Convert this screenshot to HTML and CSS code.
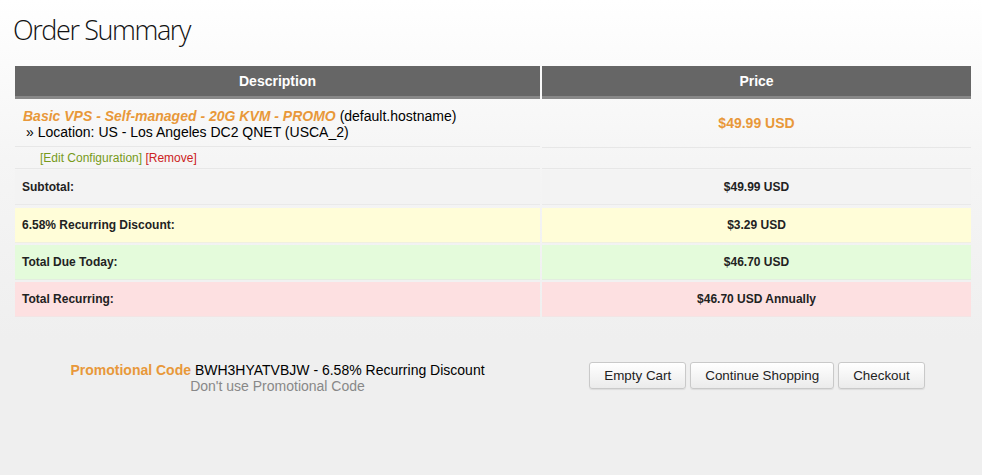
FILE: index.html
```html
<!DOCTYPE html>
<html>
<head>
<meta charset="utf-8">
<title>Order Summary</title>
<link rel="stylesheet" href="styles.css">
</head>
<body>
<div class="page">
  <h1 class="title">Order Summary</h1>
  <div class="cart">
    <div class="row head">
      <div class="cell">Description</div>
      <div class="cell">Price</div>
    </div>
    <div class="row item">
      <div class="cell desc">
        <div><span class="pname">Basic VPS - Self-managed - 20G KVM - PROMO</span> (default.hostname)</div>
        <div class="opt">&raquo; Location: US - Los Angeles DC2 QNET (USCA_2)</div>
      </div>
      <div class="cell price">$49.99 USD</div>
    </div>
    <div class="row actions">
      <div class="cell"><a class="edit" href="#">[Edit Configuration]</a> <a class="remove" href="#">[Remove]</a></div>
      <div class="cell"></div>
    </div>
    <div class="row sum subtotal">
      <div class="cell">Subtotal:</div>
      <div class="cell val">$49.99 USD</div>
    </div>
    <div class="row sum discount">
      <div class="cell">6.58% Recurring Discount:</div>
      <div class="cell val">$3.29 USD</div>
    </div>
    <div class="row sum today">
      <div class="cell">Total Due Today:</div>
      <div class="cell val">$46.70 USD</div>
    </div>
    <div class="row sum recurring">
      <div class="cell">Total Recurring:</div>
      <div class="cell val">$46.70 USD Annually</div>
    </div>
  </div>
  <div class="footer">
    <div class="promo">
      <div><span class="plabel">Promotional Code</span> BWH3HYATVBJW - 6.58% Recurring Discount</div>
      <a class="nopromo" href="#">Don't use Promotional Code</a>
    </div>
    <div class="buttons">
      <button class="btn">Empty Cart</button>
      <button class="btn">Continue Shopping</button>
      <button class="btn">Checkout</button>
    </div>
  </div>
</div>
</body>
</html>
```
FILE: styles.css
```css
html, body {
  margin: 0;
  padding: 0;
}
body {
  width: 982px;
  height: 475px;
  background: linear-gradient(to bottom, #ffffff 0px, #f5f5f5 160px, #efefef 340px, #efefef 475px);
  font-family: "Liberation Sans", Arial, Helvetica, sans-serif;
  color: #000;
  overflow: hidden;
}
.page {
  padding-left: 15px;
}
.title {
  margin: 13px 0 0 -2px;
  font-family: "Open Sans", sans-serif;
  font-weight: 300;
  font-size: 27px;
  line-height: 34px;
  letter-spacing: -1.4px;
  color: #111;
}
.cart {
  margin-top: 19px;
  width: 956px;
}
.row {
  display: grid;
  grid-template-columns: 525px 429px;
  column-gap: 2px;
}
.head .cell {
  background: #666666;
  border-bottom: 3px solid #888888;
  height: 30px;
  line-height: 30px;
  color: #fff;
  font-weight: bold;
  font-size: 14px;
  text-align: center;
}
.item .cell {
  height: 48px;
  border-bottom: 1px solid #e7e7e7;
}
.desc {
  padding: 9px 0 0 8px;
  font-size: 14px;
  line-height: 16px;
  box-sizing: border-box;
}
.pname {
  color: #e8983a;
  font-weight: bold;
  font-style: italic;
}
.opt {
  padding-left: 3px;
}
.price {
  color: #e8983a;
  font-weight: bold;
  font-size: 14px;
  text-align: center;
  line-height: 49px;
}
.actions .cell {
  height: 20px;
  border-bottom: 1px solid #e7e7e7;
  font-size: 12px;
  line-height: 21px;
  padding-left: 25px;
}
.actions {
  margin-bottom: 1px;
}
a {
  text-decoration: none;
}
.edit {
  color: #779a1a;
}
.remove {
  color: #cc2222;
}
.sum {
  margin-bottom: 2px;
}
.subtotal {
  margin-bottom: 3px;
}
.sum .cell {
  height: 34px;
  line-height: 35px;
  border-bottom: 1px solid #e9e9e9;
  font-size: 12px;
  font-weight: bold;
  color: #222;
}
.sum .cell:first-child {
  padding-left: 7px;
}
.sum .val {
  text-align: center;
}
.subtotal .cell {
  background: #f3f3f3;
}
.discount .cell {
  background: #fffdd8;
  border-bottom-color: #f0f0e0;
}
.today .cell {
  background: #e4fbdb;
  border-bottom-color: #e3ede0;
}
.recurring .cell {
  background: #fde0e1;
  border-bottom-color: #f3e4e4;
}
.footer {
  display: grid;
  grid-template-columns: 525px 429px;
  column-gap: 2px;
  align-items: center;
  margin-top: 39px;
  width: 956px;
}
.promo {
  text-align: center;
  font-size: 14px;
  line-height: 16px;
  padding-top: 6px;
}
.plabel {
  color: #e8983a;
  font-weight: bold;
}
.nopromo {
  color: #888;
}
.buttons {
  display: flex;
  justify-content: center;
  gap: 4px;
  padding-left: 1px;
}
.btn {
  height: 27px;
  padding: 0 14px;
  font-family: "Liberation Sans", Arial, sans-serif;
  font-size: 13.4px;
  color: #222;
  background: linear-gradient(to bottom, #ffffff, #ebebeb);
  border: 1px solid #c9c9c9;
  border-radius: 3px;
  box-shadow: 0 1px 1px rgba(0,0,0,0.08);
}
```
